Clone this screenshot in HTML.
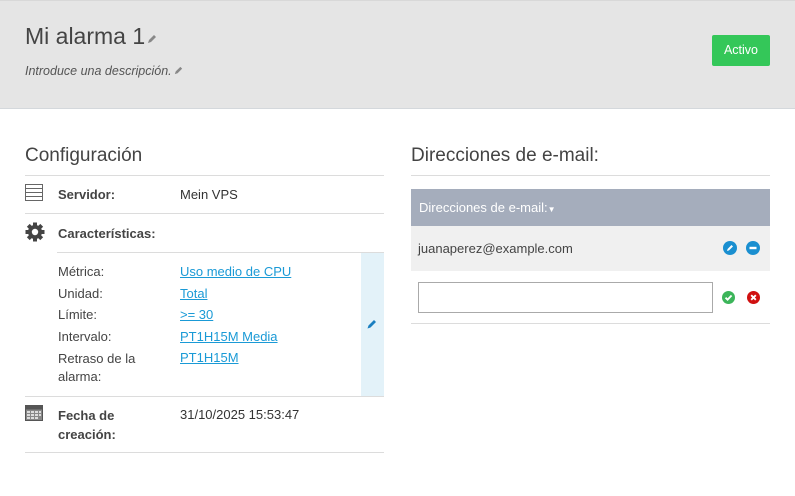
<!DOCTYPE html>
<html><head><meta charset="utf-8"><style>
*{margin:0;padding:0;box-sizing:border-box}
body{width:795px;height:496px;background:#fff;font-family:"Liberation Sans",sans-serif;color:#333;position:relative;overflow:hidden;font-size:13px}
.a{position:absolute}
.hl{position:absolute;height:1px;background:#dcdcdc}
a{color:#1a9ad6;text-decoration:underline}
.lbl{font-weight:bold;color:#444}
.r{position:absolute;line-height:16px}
</style></head><body>
<div class="a" style="left:0;top:0;width:795px;height:109px;background:#e5e5e5;border-top:1px solid #d8d8d8;border-bottom:1px solid #d4d8dc"></div>
<div class="a" style="left:25px;top:23px;font-size:23px;color:#444">Mi alarma 1</div>
<svg class="a" style="left:146px;top:33px" width="12" height="12" viewBox="0 0 12 12"><path d="M2 10 L3 7 L8 2 L10 4 L5 9 Z" fill="#888"/></svg>
<div class="a" style="left:25px;top:64px;font-size:12.5px;font-style:italic;color:#555">Introduce una descripción.</div>
<svg class="a" style="left:173px;top:65px" width="11" height="11" viewBox="0 0 12 12"><path d="M2 10 L3 7 L8 2 L10 4 L5 9 Z" fill="#888"/></svg>
<div class="a" style="left:712px;top:35px;width:58px;height:31px;background:#34c759;border-radius:2px;color:#fff;font-size:12.5px;line-height:31px;text-align:center">Activo</div>

<div class="a" style="left:25px;top:145px;font-size:19px;color:#444">Configuración</div>
<div class="hl" style="left:25px;top:175px;width:359px"></div>
<svg class="a" style="left:25px;top:184px" width="18" height="17" viewBox="0 0 18 17"><rect x="0.5" y="0.5" width="17" height="16" fill="#fff" stroke="#666"/><path d="M1 4.5H17M1 8.5H17M1 12.5H17" stroke="#666"/></svg>
<div class="a lbl" style="left:58px;top:187px">Servidor:</div>
<div class="a" style="left:180px;top:187px">Mein VPS</div>
<div class="hl" style="left:25px;top:213px;width:359px"></div>
<svg class="a" style="left:25px;top:222px" width="20" height="20" viewBox="0 0 20 20"><g fill="#444"><circle cx="10" cy="10" r="7"/><rect x="8" y="0.5" width="4" height="19"/><rect x="0.5" y="8" width="19" height="4"/><rect x="8" y="0.5" width="4" height="19" transform="rotate(45 10 10)"/><rect x="8" y="0.5" width="4" height="19" transform="rotate(-45 10 10)"/></g><circle cx="10" cy="10" r="3.2" fill="#fff"/></svg>
<div class="a lbl" style="left:58px;top:226px">Características:</div>
<div class="hl" style="left:57px;top:252px;width:327px"></div>
<div class="a" style="left:361px;top:253px;width:23px;height:143px;background:#e3f2f9"></div>
<svg class="a" style="left:366px;top:318px" width="12" height="12" viewBox="0 0 12 12"><path d="M1.5 10.5 L2.5 7.5 L8 2 L10 4 L4.5 9.5 Z" fill="#1a7fc0"/></svg>
<div class="r" style="left:58px;top:264px;color:#444">Métrica:</div><div class="r" style="left:180px;top:264px"><a>Uso medio de CPU</a></div>
<div class="r" style="left:58px;top:286px;color:#444">Unidad:</div><div class="r" style="left:180px;top:286px"><a>Total</a></div>
<div class="r" style="left:58px;top:307px;color:#444">Límite:</div><div class="r" style="left:180px;top:307px"><a>&gt;= 30</a></div>
<div class="r" style="left:58px;top:329px;color:#444">Intervalo:</div><div class="r" style="left:180px;top:329px"><a>PT1H15M Media</a></div>
<div class="r" style="left:58px;top:350px;color:#444;line-height:18px">Retraso de la<br>alarma:</div><div class="r" style="left:180px;top:350px"><a>PT1H15M</a></div>
<div class="hl" style="left:25px;top:396px;width:359px"></div>
<svg class="a" style="left:25px;top:404px" width="18" height="17" viewBox="0 0 18 17"><rect x="0.5" y="1.5" width="17" height="15" fill="#888" stroke="#555"/><rect x="1" y="1.5" width="16" height="4" fill="#555"/><g fill="#ddd"><rect x="2" y="7" width="3" height="2"/><rect x="6" y="7" width="3" height="2"/><rect x="10" y="7" width="3" height="2"/><rect x="14" y="7" width="2" height="2"/><rect x="2" y="10" width="3" height="2"/><rect x="6" y="10" width="3" height="2"/><rect x="10" y="10" width="3" height="2"/><rect x="14" y="10" width="2" height="2"/><rect x="2" y="13" width="3" height="2"/><rect x="6" y="13" width="3" height="2"/><rect x="10" y="13" width="3" height="2"/></g></svg>
<div class="a lbl" style="left:58px;top:406px;line-height:19px">Fecha de<br>creación:</div>
<div class="a" style="left:180px;top:407px">31/10/2025 15:53:47</div>
<div class="hl" style="left:25px;top:452px;width:359px"></div>

<div class="a" style="left:411px;top:145px;font-size:19px;color:#444">Direcciones de e-mail:</div>
<div class="hl" style="left:411px;top:175px;width:359px"></div>
<div class="a" style="left:411px;top:189px;width:359px;height:37px;background:#a5adbc;color:#fff;line-height:37px;padding-left:8px">Direcciones de e-mail:<span style="font-size:8px">▼</span></div>
<div class="a" style="left:411px;top:226px;width:359px;height:45px;background:#f0f0f0;line-height:45px;padding-left:7px;color:#444">juanaperez@example.com</div>
<svg class="a" style="left:723px;top:241px" width="14" height="14" viewBox="0 0 14 14"><circle cx="7" cy="7" r="7" fill="#1a8fd0"/><path d="M4 10 L4.6 8 L8.5 4 L10 5.5 L6 9.4 Z" fill="#fff"/></svg>
<svg class="a" style="left:746px;top:241px" width="14" height="14" viewBox="0 0 14 14"><circle cx="7" cy="7" r="7" fill="#1a8fd0"/><rect x="3.5" y="5.8" width="7" height="2.4" fill="#fff"/></svg>
<div class="a" style="left:418px;top:282px;width:295px;height:31px;border:1px solid #aaa;background:#fff"></div>
<svg class="a" style="left:722px;top:291px" width="13" height="13" viewBox="0 0 14 14"><circle cx="7" cy="7" r="7" fill="#3cb55a"/><path d="M3.8 7.2 L6 9.3 L10.3 4.8" stroke="#fff" stroke-width="2" fill="none"/></svg>
<svg class="a" style="left:747px;top:291px" width="13" height="13" viewBox="0 0 14 14"><circle cx="7" cy="7" r="7" fill="#d01010"/><path d="M4.5 4.5 L9.5 9.5 M9.5 4.5 L4.5 9.5" stroke="#fff" stroke-width="2"/></svg>
<div class="hl" style="left:411px;top:323px;width:359px"></div>
</body></html>
